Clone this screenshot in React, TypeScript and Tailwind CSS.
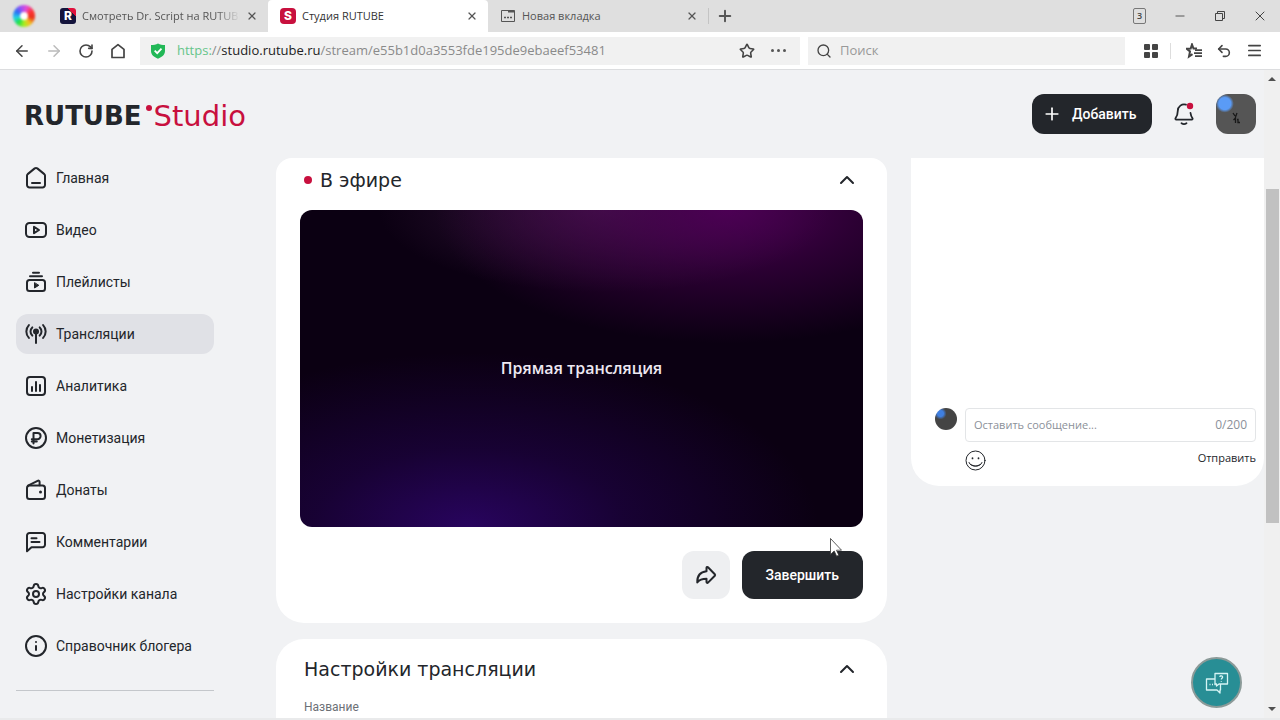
import React from 'react'
import {
  ArrowLeft, ArrowRight, ChevronUp, Info, Menu, Minus, Plus, RotateCw, Search, Settings, Star, Undo2, X,
} from 'lucide-react'

type NavItem = { label: string; icon: React.ReactNode; active?: boolean }

function Glyph({ children }: { children: React.ReactNode }) {
  return (
    <svg viewBox="0 0 24 24" className="size-6 shrink-0" fill="none" stroke="currentColor" strokeWidth="2" strokeLinecap="round" strokeLinejoin="round" aria-hidden="true">
      {children}
    </svg>
  )
}

const NAV: NavItem[] = [
  {
    label: 'Главная',
    icon: <Glyph><path d="M3 9.6c0-.6.3-1.1.7-1.5l7-5.7c.8-.6 1.8-.6 2.6 0l7 5.7c.4.4.7.9.7 1.5V19a2.5 2.5 0 0 1-2.5 2.5h-13A2.5 2.5 0 0 1 3 19z" /><path d="M8 17h8" /></Glyph>,
  },
  {
    label: 'Видео',
    icon: <Glyph><rect x="2" y="5" width="20" height="14" rx="3.5" /><path d="M10 8.8v6.4l5-3.2z" /></Glyph>,
  },
  {
    label: 'Плейлисты',
    icon: <Glyph><path d="M9 2.8h6M6 6.3h12" /><rect x="3" y="10" width="18" height="11" rx="2.5" /><path d="M10.5 13v5l4-2.5z" fill="currentColor" strokeWidth="1" /></Glyph>,
  },
  {
    label: 'Трансляции',
    active: true,
    icon: <Glyph><circle cx="12" cy="9.5" r="3" fill="currentColor" stroke="none" /><path d="M12 10v11M8.3 13.6a5.6 5.6 0 0 1 0-8.2M15.7 13.6a5.6 5.6 0 0 0 0-8.2M4.9 15.9a9.3 9.3 0 0 1 0-12.8M19.1 15.9a9.3 9.3 0 0 0 0-12.8" /></Glyph>,
  },
  {
    label: 'Аналитика',
    icon: <Glyph><rect x="3" y="3" width="18" height="18" rx="3" /><path d="M8 13v4M12 8v9M16 11v6" /></Glyph>,
  },
  {
    label: 'Монетизация',
    icon: <Glyph><circle cx="12" cy="12" r="10" /><path d="M9.5 17.5V7h4a3 3 0 0 1 0 6.2H7.8M7.8 15.6h5" /></Glyph>,
  },
  {
    label: 'Донаты',
    icon: <Glyph><rect x="3" y="7.5" width="18" height="13.5" rx="2.5" /><path d="M4 7.7l9.6-4.9c1-.5 2 .1 2 1.2v3.2" /><circle cx="16.5" cy="14" r="1.5" fill="currentColor" stroke="none" /></Glyph>,
  },
  {
    label: 'Комментарии',
    icon: <Glyph><path d="M3 5.5A2.5 2.5 0 0 1 5.5 3h13A2.5 2.5 0 0 1 21 5.5v9.3a2.5 2.5 0 0 1-2.5 2.5H7.5L3 21.3z" /><path d="M7.5 8.3h5M7.5 12h8" /></Glyph>,
  },
  { label: 'Настройки канала', icon: <Settings className="size-6 shrink-0" /> },
  { label: 'Справочник блогера', icon: <Info className="size-6 shrink-0" /> },
]

function TabTitle({ children, faded }: { children: React.ReactNode; faded?: boolean }) {
  return (
    <span className={faded
      ? 'min-w-0 flex-1 overflow-hidden whitespace-nowrap [mask-image:linear-gradient(to_right,#000_85%,transparent)]'
      : 'min-w-0 flex-1 overflow-hidden whitespace-nowrap'}>
      {children}
    </span>
  )
}

function CloseTab() {
  return (
    <button aria-label="Закрыть вкладку" className="text-[#555]"><X size={12} strokeWidth={2.4} /></button>
  )
}

function BrowserTabs() {
  return (
    <div className="flex h-8 items-stretch bg-[#dfdfdf] text-[11px] text-[#555]">
      <div className="flex w-12 shrink-0 items-center justify-center">
        <span className="flex size-[22px] items-center justify-center rounded-full bg-[conic-gradient(from_20deg,#e84bd0,#f33,#e8321e,#f5c020,#a8ee20,#1fe04a,#25cfe8,#2b6cf5,#a04df5,#e84bd0)] blur-[1px]">
          <span className="size-2 rounded-full bg-white" />
        </span>
      </div>
      <div className="flex w-[220px] items-center gap-1.5 pr-2.5 pl-3">
        <span className="flex size-4 shrink-0 items-center justify-center rounded-[3px] bg-[linear-gradient(45deg,#14143c_75%,#e0103c_75%)] font-[Inter,sans-serif] text-xs font-extrabold text-white">R</span>
        <TabTitle faded>Смотреть Dr. Script на RUTUBE</TabTitle>
        <CloseTab />
      </div>
      <div className="flex w-[220px] items-center gap-1.5 rounded-t-sm bg-white pr-2.5 pl-3 text-[#333]">
        <span className="flex size-4 shrink-0 items-center justify-center rounded-[4px] bg-[#c8103e] font-[Inter,sans-serif] text-xs font-extrabold text-white">S</span>
        <TabTitle>Студия RUTUBE</TabTitle>
        <CloseTab />
      </div>
      <div className="flex w-[220px] items-center gap-1.5 pr-2.5 pl-3">
        <svg viewBox="0 0 16 16" className="size-4" fill="none" stroke="currentColor" aria-hidden="true">
          <path d="M1.5 2.5h13v11h-13z" />
          <path d="M8 3.5h6.5" strokeWidth="2" />
          <path d="M4 9.5h2M7 9.5h2M10 9.5h2" strokeWidth="1.5" />
        </svg>
        <TabTitle>Новая вкладка</TabTitle>
        <CloseTab />
      </div>
      <div className="my-2 w-px bg-[#c4c4c4]" />
      <button aria-label="Новая вкладка" className="flex w-8 items-center justify-center"><Plus size={18} strokeWidth={2.6} /></button>
      <div className="ml-auto flex items-center text-[#444]">
        <button className="mr-3.5 h-4 w-[13px] rounded-[2px] border border-[#777] text-[9px] leading-[14px] font-semibold">3</button>
        <button aria-label="Свернуть" className="flex w-10 justify-center"><Minus size={14} strokeWidth={1.5} /></button>
        <button aria-label="Окно" className="flex w-10 justify-center">
          <svg viewBox="0 0 12 12" className="size-3" fill="none" stroke="currentColor"><path d="M1.5 3.5h7v7h-7zM3.5 3.5v-2h7v7h-2" /></svg>
        </button>
        <button aria-label="Закрыть" className="flex w-10 justify-center"><X size={16} strokeWidth={1.5} /></button>
      </div>
    </div>
  )
}

function Toolbar() {
  return (
    <div className="flex h-[38px] items-center border-b border-[#dcdddf] bg-white text-[13px] text-[#444]">
      <div className="flex w-[140px] shrink-0 items-center pl-1.5">
        <button aria-label="Назад" className="flex w-8 justify-center"><ArrowLeft size={18} /></button>
        <button aria-label="Вперёд" className="flex w-8 justify-center text-[#bbb]"><ArrowRight size={18} /></button>
        <button aria-label="Обновить" className="flex w-8 justify-center"><RotateCw size={16} strokeWidth={2.4} /></button>
        <button aria-label="Домой" className="flex w-8 justify-center">
          <svg viewBox="0 0 16 16" className="size-4" fill="none" stroke="currentColor" strokeWidth="1.7" strokeLinejoin="round"><path d="M2 6.3L8 1.6l6 4.7v8.2H2z" /></svg>
        </button>
      </div>
      <div className="flex h-7 min-w-0 flex-1 items-center gap-[11px] bg-[#f1f1f1] px-2.5">
        <svg viewBox="0 0 16 16" className="size-4 shrink-0" aria-hidden="true">
          <path d="M8 .5c2 1.2 4.400 1.600 7 1.600v6c0 3.700-3 6.200-7 7.600-4-1.400-7-3.900-7-7.600v-6c2.600 0 5-.4 7-1.600z" fill="#22b857" />
          <path d="M4.700 7.700l2.500 2.500 4.300-4.500" fill="none" stroke="#fff" strokeWidth="1.800" />
        </svg>
        <div role="textbox" aria-label="Адрес" className="min-w-0 flex-1 overflow-hidden whitespace-nowrap text-[#8a8a8a]">
          <span className="text-[#66c58a]">https:</span>//<span className="text-[#222]">studio.rutube.ru</span>/stream/e55b1d0a3553fde195de9ebaeef53481
        </div>
        <button aria-label="В закладки"><Star size={16} strokeWidth={2.4} /></button>
        <button aria-label="Ещё" className="flex w-6 justify-center gap-[3px]">
          <span className="size-[3px] rounded-full bg-[#555]" />
          <span className="size-[3px] rounded-full bg-[#555]" />
          <span className="size-[3px] rounded-full bg-[#555]" />
        </button>
      </div>
      <label className="ml-2 flex h-7 w-[317px] items-center gap-2 bg-[#f1f1f1] pl-2">
        <Search size={16} />
        <input aria-label="Поиск" placeholder="Поиск" className="min-w-0 flex-1 bg-transparent outline-none placeholder:text-[#999]" />
      </label>
      <div className="flex w-[155px] shrink-0 items-center pl-[11px]">
        <button aria-label="Расширения" className="flex w-[30px] justify-center">
          <svg viewBox="0 0 16 16" className="size-4" fill="currentColor"><rect x="1" y="1" width="6" height="6" rx="1" /><rect x="9" y="1" width="6" height="6" rx="1" /><rect x="1" y="9" width="6" height="6" rx="1" /><rect x="9" y="9" width="6" height="6" rx="1" /></svg>
        </button>
        <span className="ml-1 h-4 w-px bg-[#ddd]" />
        <button aria-label="Закладки" className="ml-2 flex w-[30px] justify-center">
          <svg viewBox="0 0 16 16" className="size-4" fill="none" stroke="currentColor" strokeWidth="2"><path d="M11 5.600L7.500 5.500 6 1.500 4.700 5.600.8 5.800l3.200 2.700L3 13.500l3.500-2.300" /><path d="M9 7.200h7M8 10.200h8M9 13.200h7" strokeWidth="1.700" /></svg>
        </button>
        <button aria-label="Отменить" className="flex w-[30px] justify-center"><Undo2 size={16} strokeWidth={2.4} /></button>
        <button aria-label="Меню" className="flex w-[30px] justify-center"><Menu size={17} strokeWidth={2.4} /></button>
      </div>
    </div>
  )
}

function PageHeader() {
  return (
    <header className="flex items-center justify-between py-6 pr-2 pl-6">
      <a href="#" className="flex items-center pt-1 font-['DejaVu_Sans',sans-serif] leading-8">
        <span className="text-[26px] font-bold text-[#23262b]">RUTUBE</span>
        <span className="mb-4 ml-1 size-1.5 rounded-full bg-[#c8103e]" />
        <span className="ml-0.5 text-[29px] text-[#c8103e]">Studio</span>
      </a>
      <div className="flex items-center">
        <button className="flex h-10 w-[120px] items-center gap-2.5 rounded-xl bg-[#23262b] pl-2.5 text-sm font-medium text-white">
          <Plus size={20} />
          Добавить
        </button>
        <button aria-label="Уведомления" className="ml-5 text-[#23262b]">
          <svg viewBox="0 0 24 24" className="size-6" fill="none" stroke="currentColor" strokeWidth="1.800" strokeLinecap="round" strokeLinejoin="round">
            <path d="M14 2.700A6.300 6.300 0 0 0 5.800 8.700c0 3.800-.9 5.600-2.300 7.600-.4.6 0 1.300.7 1.300h15.600c.7 0 1.100-.7.7-1.300-.9-1.300-1.700-3-2-5.300" />
            <path d="M9.500 21.300c1.500 1 3.500 1 5 0" />
            <circle cx="18" cy="4" r="3.200" fill="#c8103e" stroke="none" />
          </svg>
        </button>
        <button aria-label="Профиль" className="ml-5 flex size-10 items-center justify-center rounded-xl bg-[radial-gradient(circle_at_22%_24%,#5a9bf6_0_6px,#555_9px)] text-[#181818]">
          <svg viewBox="0 0 10 14" className="mt-2 h-3.5 w-2.5" fill="none" stroke="currentColor" strokeWidth="1.300"><path d="M2 2l2 3M6 2L4.500 6v6M4.500 7l-2 2M6 8.500h1v3h2" /></svg>
        </button>
      </div>
    </header>
  )
}

function Sidebar() {
  return (
    <nav className="w-[276px] shrink-0 pl-4">
      <ul className="flex w-[198px] flex-col gap-3">
        {NAV.map(item => (
          <li key={item.label}>
            <a href="#" className={item.active
              ? 'flex h-10 items-center gap-2 rounded-xl bg-[#e0e1e6] px-2'
              : 'flex h-10 items-center gap-2 rounded-xl px-2'}>
              {item.icon}
              <span className="whitespace-nowrap">{item.label}</span>
            </a>
          </li>
        ))}
      </ul>
      <hr className="mt-6 w-[198px] border-[#c4c7cb]" />
    </nav>
  )
}

function SectionHeading({ title, live }: { title: string; live?: boolean }) {
  return (
    <div className="flex items-center px-1 font-['DejaVu_Sans',sans-serif]">
      {live && <span className="mr-2 size-2 rounded-full bg-[#c8103e]" />}
      <h2 className="text-[19px] leading-7">{title}</h2>
      <button aria-label="Свернуть раздел" className="ml-auto"><ChevronUp size={24} /></button>
    </div>
  )
}

function LiveSection() {
  return (
    <section className="rounded-t-2xl rounded-b-[28px] bg-white px-6 pt-2 pb-6">
      <SectionHeading title="В эфире" live />
      <div className="mt-4 flex aspect-video items-center justify-center rounded-xl bg-[#0b0012] bg-[radial-gradient(ellipse_52%_42%_at_76%_0%,#4c0054_0%,#4c005480_45%,#4c005400_100%),radial-gradient(ellipse_40%_26%_at_54%_0%,#4a2050b0_0%,#4a205000_100%),radial-gradient(ellipse_62%_55%_at_30%_100%,#28045e_0%,#28045e70_45%,#28045e00_100%)]">
        <p className="font-['Open_Sans',sans-serif] text-base font-semibold text-[#eee8f2]">Прямая трансляция</p>
      </div>
      <div className="mt-6 flex justify-end gap-3">
        <button aria-label="Поделиться" className="flex size-12 items-center justify-center rounded-xl bg-[#eeeff1]">
          <Glyph><path d="M12.500 4.800c0-.8.9-1.200 1.500-.6l6.800 7c.4.500.4 1.100 0 1.600L14 19.600c-.6.6-1.500.2-1.500-.6v-3.200c-4.600 0-7.100 1-9.200 3.700-.2-6 2.400-10.500 9.200-11.200z" /></Glyph>
        </button>
        <button className="h-12 rounded-xl bg-[#23262b] px-6 font-medium text-white">Завершить</button>
      </div>
    </section>
  )
}

function StreamSettings() {
  return (
    <section className="rounded-[28px] bg-white px-6 pt-4 pb-6">
      <SectionHeading title="Настройки трансляции" />
      <label className="mt-4 block px-1 text-xs text-[#6c7076]">
        Название
        <input className="mt-2 block h-10 w-full rounded-lg bg-[#f1f2f4] px-3" />
      </label>
    </section>
  )
}

function Chat() {
  return (
    <aside className="flex h-[328px] w-[353px] shrink-0 flex-col justify-end rounded-b-[28px] bg-white pr-2 pb-3.5 pl-6 font-['Open_Sans',sans-serif]">
      <div className="flex items-start gap-2">
        <span className="size-[22px] shrink-0 rounded-full bg-[radial-gradient(circle_at_25%_25%,#3f7fe0_0_3px,#444_6px)]" />
        <label className="flex h-[34px] min-w-0 flex-1 items-center rounded border border-[#e3e5e7] px-2 text-xs text-[#8b9099]">
          <input aria-label="Сообщение" placeholder="Оставить сообщение..." className="min-w-0 flex-1 text-[11px] outline-none placeholder:text-[#8b9099]" />
          0/200
        </label>
      </div>
      <div className="mt-2 flex items-start justify-between pl-[30px]">
        <button aria-label="Смайлы">
          <svg viewBox="0 0 22 22" className="size-[22px]" fill="none" stroke="currentColor" strokeLinecap="round">
            <circle cx="10.500" cy="10.500" r="9.500" />
            <path d="M4 12.500c1.300 5 11.700 5 13 0M6 14.500c2.500 2 6.500 2 9 0" />
            <path d="M7.500 8v.5M13.500 8v.5" strokeWidth="1.700" />
          </svg>
        </button>
        <button className="text-[11px] leading-4 font-medium">Отправить</button>
      </div>
    </aside>
  )
}

function Scrollbar() {
  return (
    <div className="flex w-4 shrink-0 flex-col items-center bg-[#f0f0f0] py-[7px]">
      <span className="border-x-4 border-b-4 border-x-transparent border-b-[#505050]" />
      <span className="flex w-[13px] flex-1 flex-col">
        <span className="grow-[108]" />
        <span className="grow-[333] bg-[#c1c1c1]" />
        <span className="grow-[184]" />
      </span>
      <span className="border-x-4 border-t-4 border-x-transparent border-t-[#505050]" />
    </div>
  )
}

export default function App() {
  return (
    <div className="flex h-screen flex-col overflow-hidden font-['Open_Sans',sans-serif]">
      <BrowserTabs />
      <Toolbar />
      <div className="relative flex min-h-0 flex-1 border-b-2 border-[#e9eaeb] bg-[#f1f2f4] font-[Roboto,sans-serif] text-sm text-[#23262b]">
        <div className="min-w-0 flex-1 overflow-hidden">
          <PageHeader />
          <div className="flex items-start">
            <Sidebar />
            <main className="mr-6 flex min-w-0 flex-1 flex-col gap-4">
              <LiveSection />
              <StreamSettings />
            </main>
            <Chat />
          </div>
        </div>
        <Scrollbar />
        <button aria-label="Помощь" className="absolute right-[38px] bottom-2.5 flex size-[51px] items-center justify-center rounded-full border-2 border-[#8b9a98] bg-[#288e95] text-[#d5f4f4]">
          <svg viewBox="0 0 24 24" className="size-6" fill="none" stroke="currentColor" strokeWidth="1.300" strokeLinejoin="round">
            <path d="M10 2.500h12.500v10.500H14L11.500 15v-2H10z" />
            <path d="M10 8H1.500v11H12l3 3v-3h.5v-6M4.500 13.500h1M7 13.500h1M9.500 13.500h1" />
            <path d="M14.800 6c.2-1.800 3-1.500 2.800.2-.1 1-1.300 1-1.300 2.200M16.300 10v.7" />
          </svg>
        </button>
      </div>
      <svg viewBox="0 0 12 19" className="pointer-events-none absolute top-[538px] left-[830px] h-[19px] w-3" fill="#fff" stroke="#333" strokeWidth=".8" aria-hidden="true">
        <path d="M.5.5v16l3.700-3.500 2.400 5.200 2.200-1-2.300-5H11.500z" />
      </svg>
    </div>
  )
}
